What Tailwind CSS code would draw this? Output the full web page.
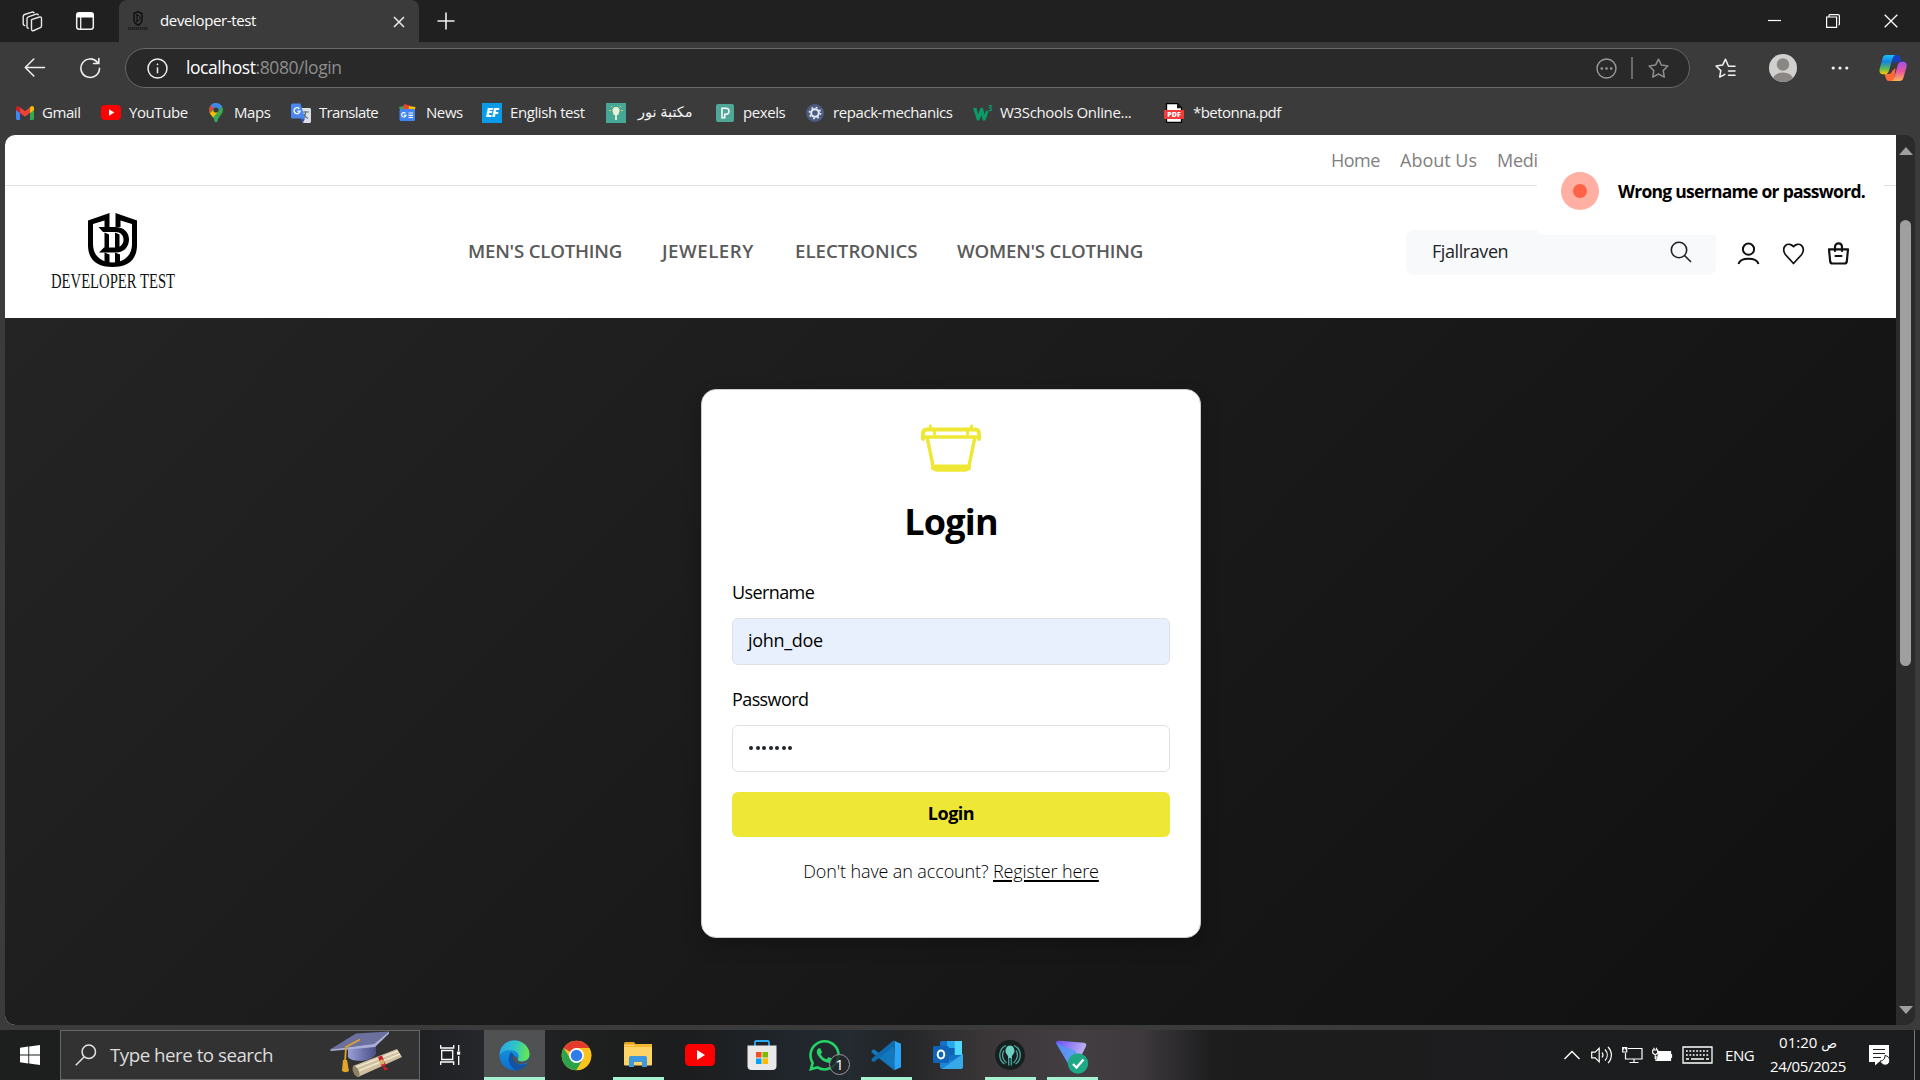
<!DOCTYPE html>
<html lang="en">
<head>
<meta charset="utf-8">
<title>developer-test</title>
<script src="https://cdn.jsdelivr.net/npm/@tailwindcss/browser@4"></script>
</head>
<body class="w-[1920px] h-[1080px] overflow-hidden bg-[#3b3b3b] font-['Open_Sans','Noto_Sans',sans-serif] flex flex-col">

<!-- Tab strip -->
<header class="h-[42px] shrink-0 bg-[#202020] flex items-stretch text-white">
  <div class="w-[119px] flex items-center pl-[22px] gap-[32px] rounded-br-lg">
    <svg class="size-[21px]" viewBox="0 0 21 21" fill="none" stroke="#e8e8e8" stroke-width="1.4" stroke-linejoin="round" stroke-linecap="round"><path d="M9.5 8.6l8-2.6c1-.3 2 .3 2 1.500v7.500c0 .8-.4 1.300-1.200 1.600l-6.500 2.900c-1.200.5-2.300 0-2.300-1.300z"/><path d="M6.300 17.200c-1-.2-1.300-.7-1.300-1.500V7.800c0-1 .4-1.700 1.300-2l8-2.700c.9-.3 1.700 0 1.900.8"/><path d="M2.700 14.500c-1-.2-1.500-.7-1.500-1.600V5.400c0-1 .5-1.600 1.400-1.900l7.400-2.400c.9-.3 1.700 0 2 .8"/></svg>
    <svg class="size-[20px]" viewBox="0 0 20 20"><rect x="1.700" y="1.700" width="16.600" height="16.600" rx="2.500" fill="none" stroke="#f0f0f0" stroke-width="1.500"/><path d="M1.500 3.500a2 2 0 0 1 2-2h13a2 2 0 0 1 2 2V6.500h-17z" fill="#fff"/><path d="M5.700 6v12" stroke="#f0f0f0" stroke-width="1.300"/></svg>
  </div>
  <div class="w-[300px] bg-[#3b3b3b] rounded-t-lg flex items-center pl-[9px] pr-[12px]">
    <svg class="w-[20px] h-[20px] shrink-0" viewBox="0 0 20 20"><path d="M6 2.500l4-1.800 4 1.800v6c0 3-1.500 4.500-4 5.500-2.500-1-4-2.500-4-5.500z" fill="none" stroke="#111" stroke-width="1.500"/><path d="M9 3v9M8 4.500h2.500c2 0 2 5 0 5H8" stroke="#111" fill="none"/><path d="M0 17.500h20" stroke="#222" stroke-width="3" stroke-dasharray="1.500 .5"/></svg>
    <span class="ml-[12px] pb-[1px] text-[15px] tracking-[-0.36px]">developer-test</span>
    <svg class="ml-auto size-[16px] mt-0.5" viewBox="0 0 16 16" stroke="#e6e6e6" stroke-width="1.600"><path d="M3 3l10 10M13 3L3 13"/></svg>
  </div>
  <svg class="ml-[18px] size-[18px] self-center" viewBox="0 0 18 18" stroke="#f0f0f0" stroke-width="1.600"><path d="M0.500 9h17M9 .5v17"/></svg>
  <div class="ml-auto flex items-center gap-[44px] pr-[22px]">
    <svg class="size-[14px]" viewBox="0 0 14 14"><path d="M0 6.500h13" stroke="#fff" stroke-width="1.200"/></svg>
    <svg class="size-[14px]" viewBox="0 0 14 14" fill="none" stroke="#fff" stroke-width="1.200"><path d="M.6 3h10v10.400H.6zM3 3V1.600C3 1 3.300.6 4 .6h8c1 0 1.400.4 1.400 1.400v8c0 .7-.4 1-1 1"/></svg>
    <svg class="size-[14px]" viewBox="0 0 14 14" stroke="#fff" stroke-width="1.300"><path d="M.7.7l12.600 12.600M13.300.7L.7 13.300"/></svg>
  </div>
</header>

<!-- Address row -->
<div class="h-[52px] shrink-0 flex items-center">
  <svg class="ml-[24px] size-[22px]" viewBox="0 0 22 22" fill="none" stroke="#eee" stroke-width="1.600" stroke-linecap="round" stroke-linejoin="round"><path d="M20.500 10.500H1.500M9.800 2L1.300 10.500l8.500 8.500"/></svg>
  <svg class="ml-[33px] size-[22px]" viewBox="0 0 22 22" fill="none" stroke="#eee" stroke-width="1.600" stroke-linecap="round"><path d="M20.500 11.300A9.300 9.300 0 1 1 18.300 5.200M19.800 1.500v5h-5.200"/></svg>
  <div class="ml-[24px] w-[1565px] h-[40px] rounded-full border border-[#686868] bg-[#292929] flex items-center pl-[21px] pr-[20px]">
    <svg class="size-[21px]" viewBox="0 0 21 21" fill="none" stroke="#eee" stroke-width="1.500"><circle cx="10.500" cy="10.500" r="9.500"/><path d="M10.500 9.300v6"/><circle cx="10.500" cy="6.300" r=".5" fill="#eee" stroke-width="1"/></svg>
    <span class="ml-[18px] pb-[2px] text-[17.500px] tracking-[-0.42px] text-white">localhost<span class="text-[#8e8e8e]">:8080/login</span></span>
    <svg class="ml-auto size-[21px]" viewBox="0 0 21 21"><circle cx="10.500" cy="10.500" r="9.500" fill="none" stroke="#999" stroke-width="1.400"/><g fill="#999"><circle cx="5.800" cy="10.500" r="1.300"/><circle cx="10.500" cy="10.500" r="1.300"/><circle cx="15.200" cy="10.500" r="1.300"/></g></svg>
    <div class="ml-[14px] w-[2px] h-[22px] bg-[#6a6a6a]"></div>
    <svg class="ml-[15px] size-[21px]" viewBox="0 0 21 21" fill="none" stroke="#8c8c8c" stroke-width="1.500" stroke-linejoin="round"><path d="M10.500 1.200l2.900 5.900 6.500.9-4.700 4.600 1.100 6.500-5.800-3.100-5.800 3.100 1.100-6.500L1.100 8l6.500-.9z"/></svg>
  </div>
  <svg class="ml-[25px] size-[21px]" viewBox="0 0 21 21" fill="none" stroke="#f2f2f2" stroke-width="1.500" stroke-linejoin="round" stroke-linecap="round"><path d="M20 8.300h-6.500l-3-7.100-2.900 5.900L1.100 8l4.700 4.600-1.100 6.500 5.100-2.700M13.500 13h6.500M13.500 17.300h6.500"/></svg>
  <svg class="ml-[33px] size-[28px]" viewBox="0 0 28 28"><clipPath id="av"><circle cx="14" cy="14" r="14"/></clipPath><g clip-path="url(#av)"><path fill="#d2d0ce" d="M0 0h28v28H0z"/><circle cx="14" cy="10.500" r="6.200" fill="#8a8785"/><path d="M3.500 28c0-6 4-9.500 10.500-9.500S24.500 22 24.500 28z" fill="#8a8785"/></g></svg>
  <svg class="ml-[34px] size-[18px]" viewBox="0 0 18 18" fill="#f2f2f2"><circle cx="2.200" cy="9" r="1.600"/><circle cx="9" cy="9" r="1.600"/><circle cx="15.800" cy="9" r="1.600"/></svg>
  <svg class="ml-[30px] size-[28px]" viewBox="0 0 28 28">
    <defs><linearGradient id="c1" x1="0" y1="0" x2="0" y2="1"><stop offset="0" stop-color="#18c4fb"/><stop offset=".35" stop-color="#1583e0"/><stop offset=".7" stop-color="#5bb95b"/><stop offset="1" stop-color="#ffc800"/></linearGradient><linearGradient id="c2" x1="0" y1="0" x2="0" y2="1"><stop offset="0" stop-color="#a050f0"/><stop offset=".5" stop-color="#e8569c"/><stop offset="1" stop-color="#ffb357"/></linearGradient></defs>
    <path d="M13 1h5c2 0 2.600 1.200 3.200 3l1.200 3.700h-4c-2 0-3 1-3.600 3z" fill="#173fc4"/>
    <path d="M15 27h-5c-2 0-2.600-1.200-3.200-3l-1.200-4h4c2 0 3-1 3.600-3l3.300-3z" fill="#ff6a35"/>
    <path d="M7.500 1H17c-2 0-2.800 1.600-3.400 3.500L10 16.500c-.8 2.600-1.800 3.800-4 3.800H4c-3 0-4-2.500-3.300-5.500L3.500 4.500C4 2.300 5 1 7.500 1z" fill="url(#c1)"/>
    <path d="M20.500 27H12c2 0 2.600-1.200 3.200-3.200l3.500-12.600C19.400 9 20.500 7.800 22.600 7.800h1.600c3 0 4 2.500 3.300 5.500l-3 10.200c-.6 2.200-1.500 3.500-4 3.500z" fill="url(#c2)"/>
  </svg>
</div>

<!-- Bookmarks bar -->
<nav class="h-[41px] shrink-0 flex items-center pb-[4px] pl-[16px] text-[15px] tracking-[-0.42px] text-[#f4f4f4] whitespace-nowrap">
  <div class="w-[85px] flex items-center gap-[8px]"><svg class="w-[18px] h-[14px]" viewBox="0 0 18 14"><path d="M0 2v10.500A1.500 1.500 0 0 0 1.500 14H4V5z" fill="#4285f4"/><path d="M18 2v10.500a1.500 1.500 0 0 1-1.500 1.500H14V5z" fill="#34a853"/><path d="M0 2C0 .2 1.800-.5 3 .5L4 1.300V7L0 4z" fill="#c5221f"/><path d="M4 1.300l5 3.900 5-3.900V7l-5 3.800L4 7z" fill="#ea4335"/><path d="M14 1.300l1-.8c1.200-1 3-.3 3 1.500v2L14 7z" fill="#fbbc04"/></svg><span class="pb-px">Gmail</span></div>
  <div class="w-[108px] flex items-center gap-[8px]"><svg class="w-[20px] h-[15px]" viewBox="0 0 20 15"><rect width="20" height="15" rx="4" fill="#f00"/><path d="M8 4.300l5.300 3.200L8 10.700z" fill="#fff"/></svg><span class="pb-px">YouTube</span></div>
  <div class="w-[82px] flex items-center gap-[11px]"><svg class="w-[14px] h-[20px]" viewBox="0 0 14 20"><path d="M7 0a7 7 0 0 1 7 7c0 4.500-4.500 6-5.500 11-.3 1.700-2.700 1.700-3 0C4.800 13 0 11.500 0 7a7 7 0 0 1 7-7z" fill="#34a853"/><path d="M1.700 2.500A7 7 0 0 1 9.300.4L4 7z" fill="#4285f4"/><path d="M1.700 2.500L4.800 5 .7 10C-.3 8 0 5 1.700 2.500z" fill="#ea4335"/><path d="M9.300.4a7 7 0 0 1 3.700 3L9 7 7 4z" fill="#4285f4"/><path d="M1 10.300L7 4.500l2.500 4-5.500 6C3 13 1.600 11.800 1 10.300z" fill="#fbbc04"/><circle cx="7" cy="7" r="2.600" fill="#3b3b3b"/></svg><span class="pb-px">Maps</span></div>
  <div class="w-[107px] flex items-center gap-[8px]"><svg class="size-[20px]" viewBox="0 0 20 20"><path d="M7 5h11.500c.8 0 1.500.7 1.500 1.500v12c0 .8-.7 1.500-1.500 1.500H12z" fill="#dcdfe3"/><path d="M11 9h7M14.500 8v1.500c0 3-1.500 5-3 6M12.500 11c1 2.500 3 4 4.500 4.500" stroke="#5f6b76" fill="none" stroke-width="1.200"/><path d="M1.500.5h8l4.500 15H1.500A1.500 1.500 0 0 1 0 14V2A1.500 1.500 0 0 1 1.500.5z" fill="#4b87f0"/><path d="M10 15.500h4L12 20z" fill="#2a56c6"/><path d="M8.300 5.700A3 3 0 1 0 9 8.200H6.300" fill="none" stroke="#fff" stroke-width="1.300"/></svg><span class="pb-px tracking-[-0.65px]">Translate</span></div>
  <div class="w-[84px] flex items-center gap-[10px]"><svg class="w-[18px] h-[17px]" viewBox="0 0 18 17"><path d="M1 3l9-2 1 5H2z" fill="#34a853"/><path d="M6 0l6 1.500L11 6H5z" fill="#ea4335"/><path d="M11 2l6.500 1L16 9h-6z" fill="#fbbc04"/><rect x="1.500" y="5" width="15.500" height="12" rx="1.500" fill="#4285f4"/><path d="M7.500 9.300a2.200 2.200 0 1 0 .5 2H6M10.500 9h4.500M10.500 11.300h4.500M10.500 13.500h4.500" stroke="#fff" stroke-width="1.200" fill="none"/></svg><span class="pb-px">News</span></div>
  <div class="w-[124px] flex items-center gap-[8px]"><span class="size-[20px] bg-[#0a9be8] text-white text-[12px] leading-[20px] text-center font-extrabold italic">EF</span><span class="pb-px">English test</span></div>
  <div class="w-[110px] flex items-center gap-[12px]"><svg class="size-[20px]" viewBox="0 0 20 20"><rect width="20" height="20" fill="#45a897"/><circle cx="10" cy="7.500" r="3.500" fill="#e8f0d8"/><path d="M10 6v11M7.500 11h5" stroke="#e8f0d8" stroke-width="1.800"/><path d="M3 7.500h2M15 7.500h2M5 3l1.500 1.500M15 3l-1.500 1.500" stroke="#e8c95a" stroke-width="1"/></svg><span dir="rtl" class="font-['Noto_Sans','DejaVu_Sans',sans-serif] text-[14.500px] tracking-normal pb-px">مكتبة نور</span></div>
  <div class="w-[90px] flex items-center gap-[9px]"><svg class="size-[18px]" viewBox="0 0 18 18"><rect width="18" height="18" rx="2" fill="#4fa798"/><path d="M6 13.800V4.300h4a3 3 0 0 1 0 6H8.700v3.500z" fill="none" stroke="#fff" stroke-width="1.500"/></svg><span class="pb-px">pexels</span></div>
  <div class="w-[167px] flex items-center gap-[9px]"><svg class="size-[18px]" viewBox="0 0 18 18"><circle cx="9" cy="9" r="9" fill="#4d5d82"/><circle cx="9" cy="9" r="3.800" fill="none" stroke="#e8ecf4" stroke-width="2"/><circle cx="9" cy="9" r="5.600" fill="none" stroke="#e8ecf4" stroke-width="1.500" stroke-dasharray="1.800 2.600"/></svg><span class="pb-px">repack-mechanics</span></div>
  <div class="w-[191px] flex items-center gap-[7px]"><svg class="w-[20px] h-[16px]" viewBox="0 0 20 16"><path d="M0 3h3.500L5 9.500 7.500 3H10l1.500 6.500L13.500 5l2 2-3.300 8.500H9.700L8.500 10l-2.300 5.500H4z" fill="#0a9b68"/><path d="M15.500.8h3L16.800 3c2.300.2 2 3-.2 2.700l-1-.5" fill="none" stroke="#0a9b68" stroke-width="1.200"/></svg><span class="pb-px tracking-[-0.34px]">W3Schools Online...</span></div>
  <div class="flex items-center gap-[9px]"><svg class="size-[20px]" viewBox="0 0 20 20"><path d="M2.500.7h11l4 4v14.600h-15z" fill="#fff" stroke="#000" stroke-width="1.300"/><path d="M13 .7l4.500 4.500H13z" fill="#111"/><rect y="7" width="20" height="9" rx="1" fill="#f33b3b"/><text x="10" y="14" text-anchor="middle" font-family="Open Sans" font-weight="800" font-size="7" letter-spacing="0" fill="#fff">PDF</text></svg><span class="pb-px tracking-[-0.55px]">*betonna.pdf</span></div>
</nav>

<!-- Page viewport -->
<div class="h-[890px] shrink-0 ml-[5px] mr-[5px] flex rounded-[10px] overflow-hidden bg-[#2b2b2b]">
  <div class="w-[1891px] relative flex flex-col bg-white">
    <div class="h-[51px] border-b border-[#dee2e6] flex items-center pl-[1326px] text-[18px] text-[#808080] whitespace-nowrap">
      <a class="w-[69px] tracking-[-0.5px]">Home</a><a class="w-[97px]">About Us</a><a class="tracking-[-0.3px]">Media</a>
    </div>
    <div class="h-[132px] flex items-center">
      <svg class="ml-[44px] w-[128px] h-[84px]" viewBox="0 -2 128 84">
        <path d="M60.500 1v14h-5V8.500L44 12v20c0 10 6 18 19.500 18.500C77 50 83 42 83 32V12L71.500 8.500V15h-5V1L88 8.500V33c0 15-9 22-24.500 22S39 48 39 33V8.500z" fill="#000"/>
        <path d="M49.500 15H66c9 0 14 5.500 14 12.500S75 40.500 67 40.500H50l5-5h12c5 0 7.500-4 7.500-8s-3-7.500-8-7.500H54z" fill="#000"/>
        <path d="M55.500 20.500l4.500 2V37h-4.500zM66 20.500l4.500 2V37H66zM55.500 40.500l5 2v9l-5-1zM66 40.500l5 2v8l-5 1z" fill="#000"/>
        <text x="2" y="76" font-family="Liberation Serif" font-size="21" textLength="124" lengthAdjust="spacingAndGlyphs" fill="#111">DEVELOPER TEST</text>
      </svg>
      <div class="ml-[291px] w-[938px] flex pb-[2px] text-[18.700px] font-semibold text-[#5a5a5a] whitespace-nowrap">
        <a class="w-[194px] tracking-[-0.22px]">MEN'S CLOTHING</a><a class="w-[133px] tracking-[0.5px]">JEWELERY</a><a class="w-[162px]">ELECTRONICS</a><a class="tracking-[-0.22px]">WOMEN'S CLOTHING</a>
      </div>
      <div class="w-[310px] h-[45px] rounded-lg bg-[#f8f9fa] flex items-center justify-between pl-[26px] pr-[24px]">
        <span class="text-[18px] tracking-[-0.42px] pb-[2px] text-[#212529]">Fjallraven</span>
        <svg class="size-[22px]" viewBox="0 0 22 22" fill="none" stroke="#222" stroke-width="1.600"><circle cx="9" cy="9" r="7.700"/><path d="M14.500 14.500l6.500 6.500"/></svg>
      </div>
      <div class="flex items-center gap-[22px] pl-[21px] pt-[3px]">
        <svg class="size-[23px]" viewBox="0 0 23 23" fill="none" stroke="#111" stroke-width="2"><circle cx="11.500" cy="7.200" r="5.600"/><path d="M1.500 22c1.200-4 4.500-5.200 10-5.200s8.800 1.200 10 5.200"/></svg>
        <svg class="size-[23px]" viewBox="0 0 23 23" fill="none" stroke="#111" stroke-width="1.700" stroke-linejoin="round"><path d="M11.500 21.500L3.300 12.500C1 9.500 1.200 5.500 3.500 3.500s6-1.500 8 1.200c2-2.700 5.700-3.200 8-1.200s2.500 6 .2 9z"/></svg>
        <svg class="size-[23px]" viewBox="0 0 23 23" fill="none" stroke="#111" stroke-width="2.200" stroke-linejoin="round" stroke-linecap="round"><path d="M2 7.300h19l-1.200 12.200c-.2 1.400-1 2-2.300 2h-12c-1.300 0-2.100-.6-2.300-2zM8 9V5.200c0-5 7-5 7 0V9M8.500 14h6"/></svg>
      </div>
    </div>

    <main class="h-[707px] bg-linear-135 from-[#242424] to-[#101010] flex justify-center pt-[71px] pl-[1px]">
      <form class="w-[500px] h-[549px] bg-white rounded-[15px] border border-[#ccc] shadow-[0_8px_20px_rgba(0,0,0,0.2)] pt-[34px] px-[30px] flex flex-col">
        <svg class="self-center w-[60px] h-[49px]" viewBox="0 0 60 49" fill="none" stroke="#eee735" stroke-linejoin="round" stroke-linecap="round"><path d="M2 15V9.500Q2 5.500 6 5.500H54Q58 5.500 58 9.500V15" stroke-width="4"/><path d="M2 13H58" stroke-width="3.500"/><path d="M9.300 2L10 5M13.500 6V10M50.700 2L50 5M46.500 6V10" stroke-width="3"/><path d="M6.500 15L12 42Q13 46 17 46H43Q47 46 48 42L53.500 15" stroke-width="3.500"/><path d="M13 43.500h34" stroke-width="6"/></svg>
        <h1 class="self-center mt-[24px] h-[50px] leading-[50px] text-[36px] font-bold text-black tracking-[-0.8px]">Login</h1>
        <label class="mt-[32px] h-[27px] leading-[27px] text-[18px] tracking-[-0.6px] text-black">Username</label>
        <div class="mt-[12px] h-[47px] rounded-md border border-[#dee2e6] bg-[#e8f0fe] px-[15px] leading-[43px] text-[18px] tracking-[-0.3px] text-black">john_doe</div>
        <label class="mt-[21px] h-[27px] leading-[27px] text-[18px] tracking-[-0.6px] text-black">Password</label>
        <div class="mt-[12px] h-[47px] rounded-md border border-[#dee2e6] px-[16px] pb-[1px] flex items-center gap-[2.500px]">
          <i class="size-[4px] rounded-full bg-[#212529]"></i><i class="size-[4px] rounded-full bg-[#212529]"></i><i class="size-[4px] rounded-full bg-[#212529]"></i><i class="size-[4px] rounded-full bg-[#212529]"></i><i class="size-[4px] rounded-full bg-[#212529]"></i><i class="size-[4px] rounded-full bg-[#212529]"></i><i class="size-[4px] rounded-full bg-[#212529]"></i>
        </div>
        <button type="button" class="mt-[20px] h-[45px] rounded-md bg-[#eee735] text-[18px] font-bold text-black tracking-[-0.5px] pb-[2px]">Login</button>
        <p class="mt-[21px] leading-[27px] text-center text-[18px] font-light text-black tracking-[-0.12px]">Don't have an account? <a class="underline decoration-2 underline-offset-2">Register here</a></p>
      </form>
    </main>

    <!-- Toast notification -->
    <div class="absolute left-[1532px] top-[18px] w-[347px] h-[82px] rounded-lg bg-white flex items-center pl-[24px] pb-[6px]">
      <span class="size-[38px] shrink-0 rounded-full bg-[#ffb0a3] flex items-center justify-center"><span class="size-[14px] rounded-full bg-[#ff6347]"></span></span>
      <span class="ml-[19px] text-[17.500px] font-bold text-black tracking-[-0.72px] whitespace-nowrap">Wrong username or password.</span>
    </div>
  </div>
  <div class="w-[19px] bg-[#2b2b2b] flex flex-col items-center pt-[12px]">
    <div class="border-x-[7px] border-b-[8px] border-x-transparent border-b-[#9f9f9f]"></div>
    <div class="mt-[65px] w-[11px] h-[446px] rounded-full bg-[#9f9f9f]"></div>
    <div class="mt-[340px] border-x-[7px] border-t-[8px] border-x-transparent border-t-[#9f9f9f]"></div>
  </div>
</div>
<div class="h-[5px] shrink-0"></div>

<!-- Taskbar -->
<footer class="h-[50px] shrink-0 flex items-stretch text-white bg-linear-to-r from-[#1d1e1e] via-[#1c1c1d] to-[#1c1d1e]">
  <div class="w-[60px] flex items-center justify-center"><svg class="size-[20px]" viewBox="0 0 20 20" fill="#fff"><path d="M0 2.700l8.300-1.200v8H0zM9.200 1.400L20 0v9.500H9.200zM0 10.500h8.300v8L0 17.300zM9.200 10.500H20V20L9.200 18.600z"/></svg></div>
  <div class="w-[360px] bg-[#323232] border border-[#666] flex items-center pl-[14px] pr-[16px]">
    <svg class="size-[22px]" viewBox="0 0 22 22" fill="none" stroke="#e4e4e4" stroke-width="1.500"><circle cx="13.800" cy="7.800" r="6.700"/><path d="M9 13L.8 21.200"/></svg>
    <span class="ml-[13px] text-[18.800px] tracking-[-0.52px] text-[#dcdcdc]">Type here to search</span>
    <svg class="ml-auto w-[74px] h-[48px]" viewBox="0 0 74 48"><defs><linearGradient id="hg" x1="0" x2="1"><stop offset="0" stop-color="#9aa0d8"/><stop offset="1" stop-color="#4a4d86"/></linearGradient></defs><path d="M19 18v8c4 6 24 5 28-3V11z" fill="url(#hg)"/><path d="M1 18.500L27 2.500 60 .5 45 13z" fill="#6c709f"/><path d="M1 18.500L45 13 60 .5v2L46 16 2 20z" fill="#a9aed6"/><path d="M31 8.500L17 16l-1 15" fill="none" stroke="#e0a526" stroke-width="1.800"/><path d="M14 29h4l2 11c-2 1.500-5 1.500-7 0z" fill="#e3a62a"/><path d="M24 35L68 18l5 8-44 20z" fill="#cfc0a0"/><path d="M25 37l44-17M27 41l44-18" stroke="#efe6cf" stroke-width="1.500"/><ellipse cx="27" cy="40.500" rx="2.800" ry="5.800" transform="rotate(-25 27 40.500)" fill="#8f8060"/><path d="M49 26l4-1.500 4 10-4 1.500z" fill="#c9202c"/><circle cx="53" cy="31" r="2.500" fill="#d8b06a"/><path d="M54 35l6 3-5 1.500z" fill="#c9202c"/></svg>
  </div>
  <div class="w-[64px] flex items-center pl-[20px] bg-linear-to-r from-[#1f2022] to-[#26272c]"><svg class="w-[21px] h-[22px]" viewBox="0 0 21 22" fill="none" stroke="#fff" stroke-width="1.300"><path d="M1.700 6.500h11v9h-11zM.7 1v3h13V1M.7 21v-3h13v3M18.700 1v6M18.700 12v9"/><path d="M17 7.500h3.200v3.200H17z" fill="#fff" stroke="none"/></svg></div>
  <div class="w-[61px] bg-[#505153] border-b-[3px] border-[#a6f2d0] flex items-center justify-center pt-[3px]">
    <svg class="size-[31px]" viewBox="0 0 31 31"><defs><linearGradient id="e1" x1="0" y1=".3" x2="1" y2=".4"><stop offset="0" stop-color="#2aa6e8"/><stop offset=".5" stop-color="#2fc3c8"/><stop offset="1" stop-color="#66eb4a"/></linearGradient><linearGradient id="e2" x1="0" y1="0" x2="0" y2="1"><stop offset="0" stop-color="#1b9de2"/><stop offset="1" stop-color="#0a6fcf"/></linearGradient></defs><circle cx="15.500" cy="15.500" r="15" fill="url(#e2)"/><path d="M.8 13C2 5 8 .5 15.500.5 24 .5 30.500 7 30.500 14c0 5-4 7.500-8 7.500-3.500 0-4.500-1.500-3.500-3 1.500-2 .5-7-5-8C8 9.500 2.500 11 .8 15z" fill="url(#e1)"/><path d="M12 12c-4 5-3 14 5 18.400 5-.2 9-2.700 12-7.400-5 2.500-9.500 2-12.500-1-2-2-2.500-4.500-1.500-7z" fill="#1353a4"/><path d="M14.500 15.500c-2 4 2 9 8.500 8.500 2.500-.2 5-1 6.500-2l2-5c-2 3-6 4.800-9 4.800-3.500 0-4.500-1.800-3.500-3.300z" fill="#505153"/></svg>
  </div>
  <div class="w-[710px] flex bg-[linear-gradient(90deg,#202122,#1d1e1e_10%,#1c1d1e_20%,#20262c_35%,#232a30_43%,#232527_50%,#3a3638_62%,#423e42_75%,#3d393c_84%,#1d1d1e_94%,#1c1c1c)]">
    <div class="w-[62px] flex items-center justify-center"><svg class="size-[31px]" viewBox="0 0 48 48"><circle cx="24" cy="24" r="23" fill="#fcc31e"/><path d="M24 24L4.100 12.500A23 23 0 0 1 43.900 12.500H24z" fill="#e33b2e"/><path d="M4.100 12.500A23 23 0 0 0 24 47l10-17.300-10-.7-10-1z" fill="#2da24c"/><path d="M24 12.500h19.900A23 23 0 0 1 24 47l10-17z" fill="#fcc31e"/><circle cx="24" cy="24" r="11.500" fill="#fff"/><circle cx="24" cy="24" r="9" fill="#2f7de9"/></svg></div>
    <div class="w-[62px] flex items-center justify-center relative"><svg class="w-[30px] h-[28px]" viewBox="0 0 30 28"><path d="M1 3c0-1.500.5-2 2-2h8l3 4H1z" fill="#e3a21a"/><rect x="1" y="3.500" width="28" height="21" rx="1" fill="#ffd466"/><path d="M1 5h10l2-2h16v3H1z" fill="#f5b92e"/><path d="M6 26V17c0-1.500 1-2 2-2h14c1 0 2 .500 2 2v9h-5v-5h-8v5z" fill="#3f97dc"/></svg><i class="absolute bottom-0 left-[6px] w-[51px] h-[3px] bg-[#a6f2d0]"></i></div>
    <div class="w-[62px] flex items-center justify-center"><svg class="w-[30px] h-[22px]" viewBox="0 0 30 22"><rect width="30" height="22" rx="4.500" fill="#f00"/><path d="M12 6l8 5-8 5z" fill="#fff"/></svg></div>
    <div class="w-[62px] flex items-center justify-center"><svg class="size-[30px]" viewBox="0 0 30 30"><path d="M8 7V2.500C8 1.500 8.300 1 9.300 1h11.400c1 0 1.300.5 1.300 1.500V7" fill="none" stroke="#29aaf0" stroke-width="1.800"/><path d="M.5 5.500h29V26c0 2.500-1.500 4-4 4h-21c-2.500 0-4-1.500-4-4z" fill="#e9e9ea"/><path fill="#f25022" d="M9 12h5.500v5.500H9z"/><path fill="#7fba00" d="M15.500 12H21v5.500h-5.500z"/><path fill="#00a4ef" d="M9 18.500h5.500V24H9z"/><path fill="#ffb900" d="M15.500 18.500H21V24h-5.500z"/></svg></div>
    <div class="w-[62px] flex items-center justify-center relative"><svg class="size-[31px]" viewBox="0 0 24 24" fill="#25d366"><path d="M17.472 14.382c-.297-.149-1.758-.867-2.030-.967-.273-.099-.471-.148-.670.150-.197.297-.767.966-.940 1.164-.173.199-.347.223-.644.075-.297-.150-1.255-.463-2.390-1.475-.883-.788-1.480-1.761-1.653-2.059-.173-.297-.018-.458.130-.606.134-.133.298-.347.446-.520.149-.174.198-.298.298-.497.099-.198.050-.371-.025-.520-.075-.149-.669-1.612-.916-2.207-.242-.579-.487-.5-.669-.510-.173-.008-.371-.010-.570-.010-.198 0-.520.074-.792.372-.272.297-1.040 1.016-1.040 2.479 0 1.462 1.065 2.875 1.213 3.074.149.198 2.096 3.200 5.077 4.487.709.306 1.262.489 1.694.625.712.227 1.360.195 1.871.118.571-.085 1.758-.719 2.006-1.413.248-.694.248-1.289.173-1.413-.074-.124-.272-.198-.570-.347m-5.421 7.403h-.004a9.870 9.870 0 01-5.031-1.378l-.361-.214-3.741.982.998-3.648-.235-.374a9.860 9.860 0 01-1.510-5.260c.001-5.450 4.436-9.884 9.888-9.884 2.640 0 5.122 1.030 6.988 2.898a9.825 9.825 0 012.893 6.994c-.003 5.450-4.437 9.884-9.885 9.884m8.413-18.297A11.815 11.815 0 0012.050 0C5.495 0 .160 5.335.157 11.892c0 2.096.547 4.142 1.588 5.945L.057 24l6.305-1.654a11.882 11.882 0 005.683 1.448h.005c6.554 0 11.890-5.335 11.893-11.893a11.821 11.821 0 00-3.480-8.413z"/></svg><span class="absolute left-[36px] top-[24px] size-[21px] rounded-full border border-[#999] bg-[#23272b]/85 text-[15px] leading-[18px] text-center">1</span></div>
    <div class="w-[62px] flex items-center justify-center relative"><svg class="size-[31px]" viewBox="0 0 31 31"><path d="M22.500.5L8.500 13.300 3 9.200.6 10.500v2L23 30l1-7z" fill="#1277bd"/><path d="M.6 18.800v2L3 22l20-15.500L22.500.5z" fill="#0f6bb0"/><path d="M22.500.5L30 3.700v23.600L22.500 30.500c.7-.3 1-1 1-2V2.500c0-1-.3-1.700-1-2z" fill="#2aa4f4"/></svg><i class="absolute bottom-0 left-[6px] w-[51px] h-[3px] bg-[#a6f2d0]"></i></div>
    <div class="w-[62px] flex items-center justify-center"><svg class="w-[30px] h-[30px]" viewBox="0 0 30 30"><rect x="7" y="1" width="22" height="20" rx="1.500" fill="#1470c4"/><path d="M14 1h7.500v7H14z" fill="#28a8ea"/><path d="M21.500 1H29v14h-7.500z" fill="#50d9ff"/><path d="M14 8h7.500v7H14z" fill="#0f62b5"/><path d="M7 14l11 7 12-7v12.500c0 1.500-.8 2.500-2.500 2.500h-18C8 29 7 28 7 26.500z" fill="#1c87d8"/><path d="M30 14L9 29h18.500c1.700 0 2.500-1 2.500-2.500z" fill="#38a8e8"/><rect y="6" width="16" height="17" rx="1.500" fill="#0f64b8"/><ellipse cx="8" cy="14.500" rx="3.300" ry="3.900" fill="none" stroke="#fff" stroke-width="2"/></svg></div>
    <div class="w-[62px] flex items-center justify-center relative"><svg class="size-[30px]" viewBox="0 0 30 30"><circle cx="15" cy="15" r="15" fill="#15201f"/><g fill="none" stroke="#4fa79f" stroke-width="1.300"><path d="M11 5.500C3 9 3 20 9.500 24M19 5.500c8 3.500 8 14.500 1.500 18.500M9 10.500c-2.500 4-1.500 8.500 2.500 12.500M21 10.500c2.500 4 1.500 8.500-2.500 12.500M13.700 17v8.500M16.300 17v8.500"/></g><path d="M15 5.500c3 0 4.500 3 4.500 5.500 0 3-2.500 3.500-3 7h-3c-.5-3.500-3-4-3-7 0-2.500 1.500-5.500 4.500-5.500z" fill="#6fd0c4"/></svg><i class="absolute bottom-0 left-[6px] w-[51px] h-[3px] bg-[#a6f2d0]"></i></div>
    <div class="w-[62px] flex items-center justify-center relative"><svg class="w-[34px] h-[34px] mt-[4px]" viewBox="0 0 34 34"><defs><linearGradient id="pg" x1="0" x2="1" y2=".5"><stop offset="0" stop-color="#6a4df8"/><stop offset="1" stop-color="#c9c0f2"/></linearGradient></defs><path d="M1 3c0-1.500 1-2.500 3-2.200l25 2c2 .2 2.800 1.700 2 3.500L20 28c-1 2-3.200 2-4.200 0z" fill="url(#pg)"/><path d="M1 3l18 7c2 1 2.300 2 1.700 4L17 29.500l-1.200-1.500z" fill="#4a9bf0" opacity=".75"/><circle cx="23" cy="23.500" r="10.200" fill="#1ea885"/><path d="M18 24l3.500 3.500 7-8" fill="none" stroke="#fff" stroke-width="2.400"/></svg><i class="absolute bottom-0 left-[6px] w-[51px] h-[3px] bg-[#a6f2d0]"></i></div>
  </div>
  <div class="ml-auto w-[356px] flex items-center">
    <svg class="w-[16px] h-[10px]" viewBox="0 0 16 10" fill="none" stroke="#fff" stroke-width="1.400"><path d="M.5 9L8 1.500 15.500 9"/></svg>
    <svg class="ml-[11px] w-[22px] h-[18px]" viewBox="0 0 22 18" fill="none" stroke="#fff" stroke-width="1.200"><path d="M.7 6.200h3.500l4-4v13.600l-4-4H.7zM11 6.500c1.200 1.500 1.200 3.500 0 5M14 3.500c3 3.300 3 7.700 0 11M17 1c4.500 4.500 4.500 11.500 0 16"/></svg>
    <svg class="ml-[9px] w-[21px] h-[18px]" viewBox="0 0 21 18" fill="none" stroke="#fff" stroke-width="1.200"><path d="M6 2.500h14v10.500H3.500V7M12 13v3.500M7.500 16.500h9M.7 1.500h4V6h-4zM1.700 1.500V3.500M3.500 1.500v2"/></svg>
    <svg class="ml-[9px] w-[21px] h-[16px]" viewBox="0 0 21 16" fill="none" stroke="#fff" stroke-width="1.200"><path d="M5 4.600h13.500V13.500H4V9"/><path d="M6.500 5.500h11v7h-12z" fill="#fff"/><path d="M19.500 7v4M.7 3h5v3l-2.500 2L.7 6zM2 .8V3M4.500.8V3M3.200 8v4"/></svg>
    <svg class="ml-[9px] w-[31px] h-[18px]" viewBox="0 0 31 18" fill="none" stroke="#fff" stroke-width="1.300"><path d="M1 1h29v16H1z"/><path d="M4 5h23M4 9h23" stroke-dasharray="1.800 1.600"/><path d="M4 13h3M9 13h13M24 13h3"/></svg>
    <span class="ml-[12px] w-[45px] text-[15px] tracking-[-0.4px]">ENG</span>
    <div class="w-[76px] text-[15px] leading-[23px] pb-px text-center tracking-[-0.36px] whitespace-nowrap"><div>01:20 <span class="font-['DejaVu_Sans',sans-serif] text-[13px]">ص</span></div><div>24/05/2025</div></div>
    <svg class="ml-[23px] size-[21px]" viewBox="0 0 21 21"><path d="M0 0h20v17H10l-4 3.500V17H0z" fill="#fff"/><path d="M4 4.500h12M4 8.500h12M4 12.500h8" stroke="#222" stroke-width="1.200"/><path d="M16 10.500c0 4-2.500 5.500-5 5.500 1 2.500 3 4.200 5.500 4.200 2.300 0 4.200-2 4.200-4.700 0-2.500-1.700-4.700-4.700-5z" fill="#fff" stroke="#222"/></svg>
    <div class="ml-auto mr-[5px] w-px h-full bg-[#777]"></div>
  </div>
</footer>
</body>
</html>
